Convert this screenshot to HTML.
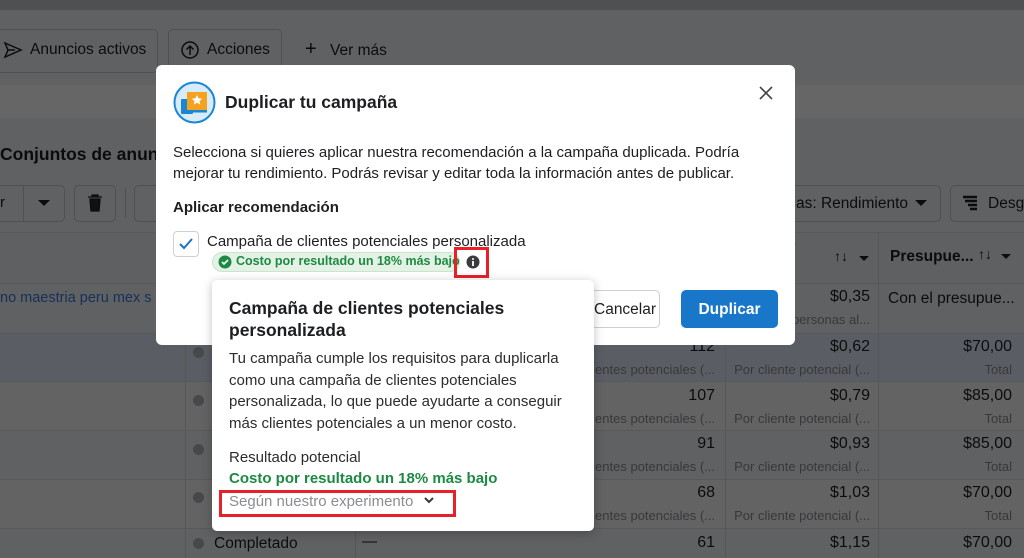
<!DOCTYPE html>
<html><head><meta charset="utf-8"><style>
*{box-sizing:border-box;margin:0;padding:0}
html,body{background:#f0f2f5}
body{width:1024px;height:558px;overflow:hidden;position:relative;font-family:"Liberation Sans",sans-serif;color:#1c1e21}
.a{position:absolute}
.t{white-space:nowrap}
.btn{position:absolute;border:1px solid #c6c8cc;border-radius:5px;background:#f0f2f5}
.row{position:absolute;left:0;width:1024px;border-top:1px solid #dcdee2}
.dot{position:absolute;left:193px;width:11px;height:11px;border-radius:50%;background:#b0b3b8}
.num{position:absolute;font-size:16px;color:#1c1e21;text-align:right}
.sub{position:absolute;font-size:13px;color:#8a8d91;text-align:right;white-space:nowrap}
</style></head><body>
<div class="a" style="left:0;top:0;width:1024px;height:558px;background:#f0f2f5"></div>
<div class="a" style="left:0;top:0;width:1024px;height:10px;background:#c4c8cc"></div>
<div class="a" style="left:0;top:85px;width:1024px;height:33px;background:#ffffff"></div>
<div class="btn" style="left:-5px;top:29px;width:163px;height:44px"></div>
<svg class="a" style="left:3px;top:40px" width="20" height="20" viewBox="0 0 20 20"><path d="M2 3 L18 10 L2 17 L5 10 Z M5 10 H12" fill="none" stroke="#1c1e21" stroke-width="1.5"/></svg>
<div class="a t" style="left:30px;top:41px;font-size:15.5px">Anuncios activos</div>
<div class="btn" style="left:168px;top:29px;width:114px;height:44px"></div>
<svg class="a" style="left:180px;top:40px" width="20" height="20" viewBox="0 0 20 20"><circle cx="10" cy="10" r="8" fill="none" stroke="#1c1e21" stroke-width="1.5"/><path d="M10 15V6M6.5 9.5L10 6l3.5 3.5" fill="none" stroke="#1c1e21" stroke-width="1.5"/></svg>
<div class="a t" style="left:207px;top:41px;font-size:15.5px">Acciones</div>
<div class="a t" style="left:305px;top:38px;font-size:20px">+</div>
<div class="a t" style="left:330px;top:42px;font-size:15.5px">Ver más</div>
<div class="a t" style="left:0;top:144px;font-size:17.5px;font-weight:bold">Conjuntos de anunci</div>
<div class="btn" style="left:-10px;top:185px;width:75px;height:37px"></div>
<div class="a" style="left:23px;top:185px;width:1px;height:37px;background:#c6c8cc"></div>
<div class="a t" style="left:0;top:194px;font-size:15px">r</div>
<div class="a" style="left:38px;top:200px;border:6px solid transparent;border-top:6px solid #1c1e21"></div>
<div class="btn" style="left:74px;top:185px;width:42px;height:37px"></div>
<svg class="a" style="left:86px;top:193px" width="18" height="20" viewBox="0 0 18 20"><path d="M2 4h14M6 4V2h6v2M4 6l1 12h8l1-12Z" fill="#2a2b2d" stroke="#1c1e21" stroke-width="1.3"/></svg>
<div class="a" style="left:125px;top:188px;width:1px;height:30px;background:#c6c8cc"></div>
<div class="btn" style="left:134px;top:185px;width:40px;height:37px"></div>
<div class="btn" style="left:760px;top:185px;width:181px;height:37px"></div>
<div class="a t" style="left:796px;top:195px;font-size:15.5px">as: Rendimiento</div>
<div class="a" style="left:915px;top:200px;border:6px solid transparent;border-top:6px solid #1c1e21"></div>
<div class="btn" style="left:950px;top:185px;width:90px;height:37px"></div>
<svg class="a" style="left:962px;top:195px" width="16" height="16" viewBox="0 0 16 16"><path d="M1 2h14M3 6h12M6 10h9M8 14h7" stroke="#1c1e21" stroke-width="2.5"/></svg>
<div class="a t" style="left:988px;top:195px;font-size:15.5px">Desg</div>
<div class="row" style="top:232px;height:51px;background:#eef0f3"></div>
<div class="row" style="top:283px;height:50px;background:#f0f2f5"></div>
<div class="row" style="top:333px;height:48px;background:#e2ebfa"></div>
<div class="row" style="top:381px;height:49px;background:#f7f8fa"></div>
<div class="row" style="top:430px;height:49px;background:#f0f2f5"></div>
<div class="row" style="top:479px;height:49px;background:#f7f8fa"></div>
<div class="row" style="top:528px;height:30px;background:#f0f2f5"></div>
<div class="a" style="left:878px;top:232px;width:1px;height:326px;background:#d6d8dc"></div>
<div class="a" style="left:725px;top:232px;width:1px;height:326px;background:#d6d8dc"></div>
<div class="a" style="left:185px;top:283px;width:1px;height:275px;background:#d6d8dc"></div>
<div class="a" style="left:355px;top:528px;width:1px;height:30px;background:#d6d8dc"></div>
<div class="a t" style="left:790px;top:237px;font-size:14px;font-weight:bold">r</div>
<div class="a t" style="left:834px;top:248px;font-size:14px">↑↓</div>
<div class="a" style="left:859px;top:256px;border:5px solid transparent;border-top:5px solid #1c1e21"></div>
<div class="a t" style="left:890px;top:248px;font-size:15.5px;font-weight:bold">Presupue...</div>
<div class="a t" style="left:978px;top:246px;font-size:14px">↑↓</div>
<div class="a" style="left:1001px;top:254px;border:5px solid transparent;border-top:5px solid #1c1e21"></div>
<div class="a t" style="left:0;top:290px;font-size:14.5px;color:#3a7be0">no maestria peru mex s</div>
<div class="num" style="left:760px;top:288px;width:110px">$0,35</div>
<div class="sub" style="left:760px;top:312px;width:110px">personas al...</div>
<div class="a t" style="left:888px;top:290px;font-size:15.5px">Con el presupue...</div>
<div class="dot" style="top:347px"></div><div class="dot" style="top:395px"></div><div class="dot" style="top:444px"></div><div class="dot" style="top:492px"></div><div class="dot" style="top:538px"></div>
<div class="a t" style="left:214px;top:535px;font-size:15.5px">Completado</div>
<div class="a t" style="left:362px;top:533px;font-size:15px">—</div>
<div class="num" style="left:600px;top:338px;width:115px">112</div><div class="sub" style="left:560px;top:362px;width:155px">entes potenciales (...</div>
<div class="num" style="left:600px;top:387px;width:115px">107</div><div class="sub" style="left:560px;top:411px;width:155px">entes potenciales (...</div>
<div class="num" style="left:600px;top:435px;width:115px">91</div><div class="sub" style="left:560px;top:459px;width:155px">entes potenciales (...</div>
<div class="num" style="left:600px;top:484px;width:115px">68</div><div class="sub" style="left:560px;top:508px;width:155px">entes potenciales (...</div>
<div class="num" style="left:600px;top:534px;width:115px">61</div>
<div class="num" style="left:730px;top:338px;width:140px">$0,62</div><div class="sub" style="left:730px;top:362px;width:140px">Por cliente potencial (...</div>
<div class="num" style="left:730px;top:387px;width:140px">$0,79</div><div class="sub" style="left:730px;top:411px;width:140px">Por cliente potencial (...</div>
<div class="num" style="left:730px;top:435px;width:140px">$0,93</div><div class="sub" style="left:730px;top:459px;width:140px">Por cliente potencial (...</div>
<div class="num" style="left:730px;top:484px;width:140px">$1,03</div><div class="sub" style="left:730px;top:508px;width:140px">Por cliente potencial (...</div>
<div class="num" style="left:730px;top:534px;width:140px">$1,15</div>
<div class="num" style="left:880px;top:338px;width:132px">$70,00</div><div class="sub" style="left:880px;top:362px;width:132px">Total</div>
<div class="num" style="left:880px;top:387px;width:132px">$85,00</div><div class="sub" style="left:880px;top:411px;width:132px">Total</div>
<div class="num" style="left:880px;top:435px;width:132px">$85,00</div><div class="sub" style="left:880px;top:459px;width:132px">Total</div>
<div class="num" style="left:880px;top:484px;width:132px">$70,00</div><div class="sub" style="left:880px;top:508px;width:132px">Total</div>
<div class="num" style="left:880px;top:534px;width:132px">$70,00</div>

<!-- overlay -->
<div class="a" style="left:0;top:0;width:1024px;height:558px;background:rgba(0,0,0,0.6)"></div>

<!-- modal -->
<div class="a" style="left:156px;top:65px;width:639px;height:280px;background:#fff;border-radius:6px"></div>
<svg class="a" style="left:173px;top:81px" width="43" height="43" viewBox="0 0 43 43"><circle cx="21.5" cy="21.5" r="20" fill="#d7ebf8" stroke="#1b86d4" stroke-width="2"/><rect x="8" y="18" width="12" height="15" rx="1" fill="#1b86d4"/><rect x="14" y="11" width="20" height="18" fill="#f4a21f"/><path d="M24 14l1.6 3.3 3.6.4-2.7 2.4.8 3.5-3.3-1.8-3.3 1.8.8-3.5-2.7-2.4 3.6-.4z" fill="#fff"/><rect x="14" y="29" width="20" height="2.5" fill="#1b86d4"/></svg>
<div class="a t" style="left:225px;top:92px;font-size:17.5px;font-weight:bold">Duplicar tu campaña</div>
<svg class="a" style="left:759px;top:86px" width="14" height="14" viewBox="0 0 14 14"><path d="M1 1L13 13M13 1L1 13" stroke="#444" stroke-width="1.6"/></svg>
<div class="a" style="left:173px;top:142px;width:600px;font-size:15px;line-height:21px;color:#1c1e21">Selecciona si quieres aplicar nuestra recomendación a la campaña duplicada. Podría mejorar tu rendimiento. Podrás revisar y editar toda la información antes de publicar.</div>
<div class="a t" style="left:173px;top:199px;font-size:15px;font-weight:bold">Aplicar recomendación</div>
<div class="a" style="left:173px;top:231px;width:26px;height:26px;border:1px solid #ccd0d5;border-radius:4px"></div>
<svg class="a" style="left:178px;top:237px" width="16" height="14" viewBox="0 0 16 14"><path d="M2 7l4 4 8-9" fill="none" stroke="#1b74c9" stroke-width="2"/></svg>
<div class="a t" style="left:207px;top:233px;font-size:15px">Campaña de clientes potenciales personalizada</div>
<div class="a" style="left:212px;top:252px;width:248px;height:20px;border-radius:10px;background:#e3f2e4;border:1px solid #c9e5cc"></div>
<svg class="a" style="left:218px;top:255px" width="14" height="14" viewBox="0 0 14 14"><circle cx="7" cy="7" r="6.5" fill="#1c8a43"/><path d="M4 7l2 2 4-4" fill="none" stroke="#fff" stroke-width="1.6"/></svg>
<div class="a t" style="left:236px;top:254px;font-size:12.5px;font-weight:bold;color:#1c8a43">Costo por resultado un 18% más bajo</div>
<svg class="a" style="left:466px;top:255px" width="14" height="14" viewBox="0 0 14 14"><circle cx="7" cy="7" r="6.5" fill="#3a3b3d"/><rect x="6.1" y="6" width="1.8" height="5" fill="#fff"/><circle cx="7" cy="4" r="1" fill="#fff"/></svg>
<div class="a" style="left:454px;top:247px;width:35px;height:31px;border:3px solid #e8202a"></div>
<div class="a" style="left:560px;top:290px;width:100px;height:38px;border:1px solid #ccd0d5;border-radius:5px;background:#fff"></div>
<div class="a t" style="left:594px;top:301px;font-size:15.5px">Cancelar</div>
<div class="a" style="left:681px;top:290px;width:97px;height:38px;border-radius:5px;background:#1877c9"></div>
<div class="a t" style="left:681px;top:301px;width:97px;text-align:center;font-size:15.5px;font-weight:bold;color:#fff">Duplicar</div>

<!-- popover -->
<div class="a" style="left:212px;top:280px;width:382px;height:251px;background:#fff;border-radius:5px;box-shadow:0 2px 10px rgba(0,0,0,.25)"></div>
<div class="a" style="left:229px;top:297px;width:340px;font-size:17.5px;line-height:22px;font-weight:bold">Campaña de clientes potenciales personalizada</div>
<div class="a" style="left:229px;top:348px;width:360px;font-size:15px;line-height:21.7px;color:#2b2c2e">Tu campaña cumple los requisitos para duplicarla como una campaña de clientes potenciales personalizada, lo que puede ayudarte a conseguir más clientes potenciales a un menor costo.</div>
<div class="a t" style="left:229px;top:449px;font-size:15px;color:#2b2c2e">Resultado potencial</div>
<div class="a t" style="left:229px;top:470px;font-size:15px;font-weight:bold;color:#1c8a43">Costo por resultado un 18% más bajo</div>
<div class="a t" style="left:229px;top:493px;font-size:15px;color:#8a8d91">Según nuestro experimento</div>
<svg class="a" style="left:423px;top:496px" width="12" height="9" viewBox="0 0 12 9"><path d="M2 2l4 4 4-4" fill="none" stroke="#3a3b3d" stroke-width="2"/></svg>
<div class="a" style="left:219px;top:490px;width:237px;height:27px;border:3px solid #e8202a"></div>
</body></html>
